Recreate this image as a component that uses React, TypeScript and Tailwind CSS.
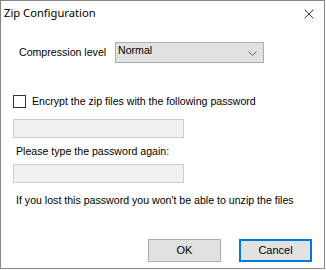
import { X } from "lucide-react";

const body = { fontFamily: '"Liberation Sans", Arial, sans-serif' };

export default function App() {
    return (
        <div className="w-[326px] h-[270px] bg-white">
            <div className="w-[325px] h-[269px] border border-[#868686] bg-white flex flex-col text-black">
                <div className="h-[30px] flex items-center justify-between pl-[3px] pr-[7px] pb-[5px]">
                    <span className="text-[11.2px]" style={{ fontFamily: '"Noto Sans", "Open Sans", sans-serif' }}>
                        Zip Configuration
                    </span>
                    <X className="w-[16px] h-[16px]" strokeWidth={1.2} />
                </div>

                <div className="flex flex-col text-[10.6px]" style={body}>
                    <div className="flex items-center mt-[11px] pl-[18px]">
                        <span className="w-[96px]">Compression level</span>
                        <div className="w-[149px] h-[21px] border border-[#adadad] bg-[#e1e1e1] flex items-center justify-between pl-[2px] pr-[6px]">
                            <span className="-mt-[3px]">Normal</span>
                            <svg width="9" height="5" viewBox="0 0 9 5" className="mt-[1px]">
                                <path d="M0.5 0.5 L4.5 4.5 L8.5 0.5" fill="none" stroke="#606060" strokeWidth="1" />
                            </svg>
                        </div>
                    </div>

                    <div className="flex items-center mt-[31px] pl-[12px] gap-[6px]">
                        <div className="w-[13px] h-[13px] border border-[#333] bg-white" />
                        <span>Encrypt the zip files with the following password</span>
                    </div>

                    <div className="ml-[12px] mt-[9px] w-[171px] h-[19px] border border-[#cccccc] bg-[#f0f0f0]" />

                    <span className="ml-[15px] mt-[7px] leading-[13px]">Please type the password again:</span>

                    <div className="ml-[12px] mt-[6px] w-[171px] h-[19px] border border-[#cccccc] bg-[#f0f0f0]" />

                    <span className="ml-[15px] mt-[11px] leading-[13px]">
                        If you lost this password you won't be able to unzip the files
                    </span>

                    <div className="flex justify-end gap-[18px] mt-[32px] pr-[12px]">
                        <div className="w-[73px] h-[23px] border border-[#adadad] bg-[#e1e1e1] flex items-center justify-center text-[11px]">
                            OK
                        </div>
                        <div className="w-[73px] h-[23px] border-2 border-[#0078d7] bg-[#e1e1e1] flex items-center justify-center text-[11px]">
                            Cancel
                        </div>
                    </div>
                </div>
            </div>
        </div>
    );
}
